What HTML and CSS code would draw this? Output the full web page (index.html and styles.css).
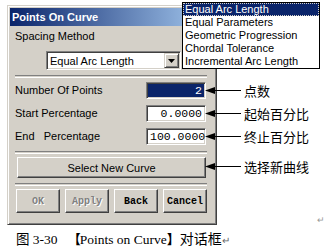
FILE: index.html
```html
<!DOCTYPE html>
<html lang="en">
<head>
  <meta charset="UTF-8" />
  <title>Points On Curve</title>
  <link rel="stylesheet" href="styles.css">
</head>
<body>
  <div class="figure">

    <div class="top">
      <!-- the dialog itself -->
      <div class="dialog">
        <div class="titlebar">Points On Curve</div>
        <div class="body">
          <div class="label method">Spacing Method</div>
          <div class="combo">
            <span class="combo-text">Equal Arc Length</span>
            <span class="combo-btn">
              <svg width="7" height="4" viewBox="0 0 7 4"><path d="M0 0H7L3.5 4Z" fill="#000"/></svg>
            </span>
          </div>
          <div class="sep"></div>

          <div class="fields">
            <div class="field">
              <span class="label">Number Of Points</span>
              <span class="input selected">2</span>
            </div>
            <div class="field">
              <span class="label">Start Percentage</span>
              <span class="input">0.0000</span>
            </div>
            <div class="field">
              <span class="label">End&nbsp;&nbsp; Percentage</span>
              <span class="input">100.0000</span>
            </div>
          </div>
          <div class="sep sep-low"></div>

          <button class="btn wide">Select New Curve</button>
          <div class="sep"></div>

          <div class="actions">
            <button class="btn mono" disabled>OK</button>
            <button class="btn mono" disabled>Apply</button>
            <button class="btn mono">Back</button>
            <button class="btn mono">Cancel</button>
          </div>
        </div>
      </div>

      <!-- callouts on the right -->
      <div class="notes">
        <div class="note">
          <svg class="arrow" width="36" height="9" viewBox="0 0 36 9"><path d="M0 4.5L10 1V8Z"/><line x1="9" y1="4.5" x2="36" y2="4.5" stroke="#000"/></svg>
          <span>点数</span>
        </div>
        <div class="note">
          <svg class="arrow" width="36" height="9" viewBox="0 0 36 9"><path d="M0 4.5L10 1V8Z"/><line x1="9" y1="4.5" x2="36" y2="4.5" stroke="#000"/></svg>
          <span>起始百分比</span>
        </div>
        <div class="note">
          <svg class="arrow" width="36" height="9" viewBox="0 0 36 9"><path d="M0 4.5L10 1V8Z"/><line x1="9" y1="4.5" x2="36" y2="4.5" stroke="#000"/></svg>
          <span>终止百分比</span>
        </div>
        <div class="note note-curve">
          <svg class="arrow" width="36" height="9" viewBox="0 0 36 9"><path d="M0 4.5L10 1V8Z"/><line x1="9" y1="4.5" x2="36" y2="4.5" stroke="#000"/></svg>
          <span>选择新曲线</span>
        </div>
        <div class="mark">&#8629;</div>
      </div>
    </div>

    <p class="caption">
      <span class="fig-no">图 3-30</span><span class="bracket open">【</span>Points on Curve<span class="bracket close">】</span><span class="zh">对话框</span><span class="ret">&#8629;</span>
    </p>

    <!-- open drop-down list of the combo box -->
    <ul class="popup">
      <li class="active">Equal Arc Length</li>
      <li>Equal Parameters</li>
      <li>Geometric Progression</li>
      <li>Chordal Tolerance</li>
      <li>Incremental Arc Length</li>
    </ul>

  </div>
</body>
</html>
```

FILE: styles.css
```css
body {
  margin: 0;
  background-color: #fff;
  font-family: "Liberation Sans", Arial, sans-serif;
  font-size: 11px;
  color: #000;
}
.figure {
  position: relative;
  width: 326px;
  padding: 5px 0 0 7px;
  box-sizing: border-box;
}
.top {
  display: flex;
}

/* dialog frame */
.dialog {
  width: 210px;
  box-sizing: border-box;
  padding: 2px;
  background-color: #d4d0c8;
  border: 1px solid;
  border-color: #d4d0c8 #404040 #404040 #d4d0c8;
  box-shadow: inset 1px 1px #fff, inset -1px -1px #808080;
}
.titlebar {
  height: 18px;
  line-height: 18px;
  padding-left: 2px;
  color: #fff;
  font-weight: bold;
  background: linear-gradient(to right, #0a246a, #a6caf0);
}
.body {
  padding: 4px 7px 2px 5px;
}
.label {
  line-height: 13px;
}

/* combo box */
.combo {
  display: flex;
  align-items: center;
  width: 135px;
  height: 19px;
  box-sizing: border-box;
  margin: 8px 0 0 31px;
  padding: 0 1px 0 2px;
  background-color: #fff;
  border: 1px solid;
  border-color: #808080 #fff #fff #808080;
  box-shadow: inset 1px 1px #404040, inset -1px -1px #d4d0c8;
}
.combo-text {
  flex: 1;
  padding-left: 1px;
}
.combo-btn {
  display: flex;
  align-items: center;
  justify-content: center;
  width: 15px;
  height: 15px;
  box-sizing: border-box;
  background-color: #d4d0c8;
  border: 1px solid;
  border-color: #d4d0c8 #404040 #404040 #d4d0c8;
  box-shadow: inset 1px 1px #fff, inset -1px -1px #808080;
}

/* etched separator */
.sep {
  height: 1px;
  margin-top: 5px;
  border-top: 1px solid #808080;
  border-bottom: 1px solid #fff;
}
.sep-low {
  margin-top: 6px;
}

/* numeric fields */
.fields {
  display: flex;
  flex-direction: column;
  gap: 6px;
  margin-top: 4px;
}
.field {
  display: flex;
  align-items: center;
  justify-content: space-between;
}
.input {
  width: 60px;
  height: 17px;
  box-sizing: border-box;
  margin-right: 1px;
  padding: 0 3px;
  text-align: right;
  line-height: 15px;
  font-family: "Liberation Mono", "Courier New", monospace;
  font-size: 11.5px;
  background-color: #fff;
  border: 1px solid;
  border-color: #808080 #fff #fff #808080;
  box-shadow: inset 1px 1px #404040, inset -1px -1px #d4d0c8;
}
.input.selected {
  color: #fff;
  background-color: #0a246a;
}

/* push buttons */
.btn {
  display: block;
  height: 24px;
  padding: 0;
  font-family: "Liberation Sans", Arial, sans-serif;
  font-size: 11px;
  color: #000;
  background-color: #d4d0c8;
  border: 1px solid;
  border-color: #fff #404040 #404040 #fff;
  box-shadow: inset -1px -1px #808080;
}
.btn.wide {
  width: 189px;
  height: 21px;
  margin: 3px 0 0 2px;
}
.btn.mono {
  font-family: "Liberation Mono", "Courier New", monospace;
  font-size: 10px;
  font-weight: bold;
}
.btn:disabled {
  color: #808080;
  text-shadow: 1px 1px #fff;
}
.actions {
  display: grid;
  grid-template-columns: repeat(4, 1fr);
  gap: 5px;
  margin: 3px 0 0 1px;
}

/* callouts */
.notes {
  display: flex;
  flex-direction: column;
  width: 121px;
  margin-left: -12px;
  padding-top: 77px;
  position: relative;
  z-index: 1;
}
.note {
  display: flex;
  align-items: center;
  gap: 3px;
  height: 16px;
  margin-bottom: 7px;
  font-family: "Noto Sans CJK SC", sans-serif;
  font-size: 13px;
}
.note-curve {
  margin-top: 7px;
}
.arrow {
  display: block;
  fill: #000;
}
.mark {
  margin-top: 34px;
  padding-right: 1px;
  text-align: right;
  font-size: 9px;
  line-height: 10px;
  color: #999;
}

/* figure caption */
.caption {
  margin: 5px 0 0 9px;
  font-family: "Liberation Serif", "Noto Sans CJK SC", serif;
  font-size: 13.5px;
  line-height: 16px;
  white-space: nowrap;
}
.fig-no {
  margin-right: 10px;
}
.bracket {
  display: inline-block;
  font-family: "Noto Sans CJK SC", sans-serif;
  font-weight: bold;
  font-size: 13px;
  line-height: 16px;
}
.bracket.open {
  margin-right: -1px;
}
.zh {
  font-family: "Noto Sans CJK SC", sans-serif;
  font-size: 14px;
}
.ret {
  font-size: 10px;
  color: #666;
}

/* open drop-down list */
.popup {
  position: absolute;
  left: 182px;
  top: 2px;
  z-index: 2;
  width: 138px;
  margin: 0;
  padding: 0;
  list-style: none;
  box-sizing: border-box;
  background-color: #fff;
  border: 1px solid #000;
}
.popup li {
  height: 13px;
  line-height: 13px;
  padding-left: 2px;
}
.popup li.active {
  color: #fff;
  background-color: #0a246a;
  outline: 1px dotted #d4d0c8;
  outline-offset: -1px;
}
```
